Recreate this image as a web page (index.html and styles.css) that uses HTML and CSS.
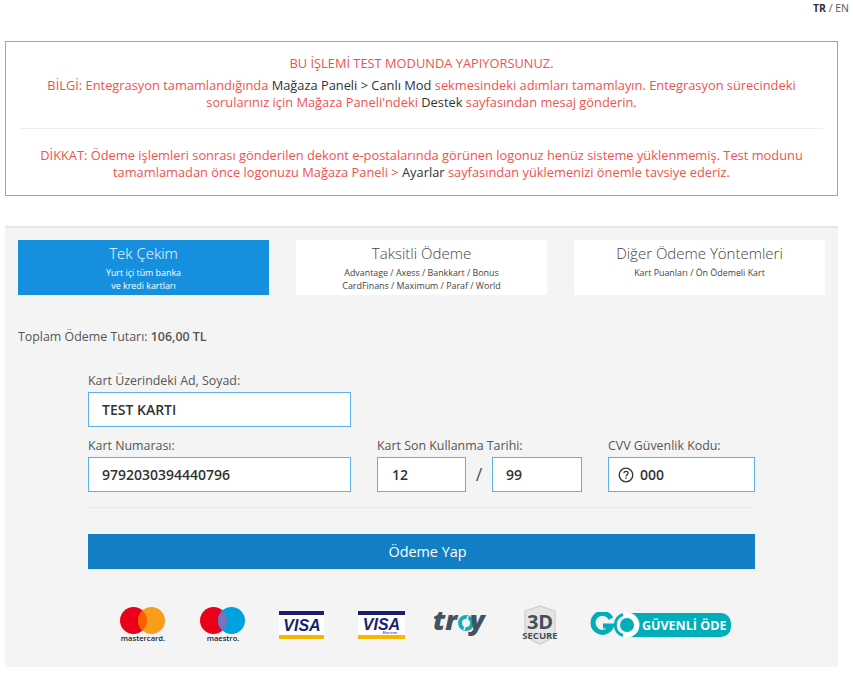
FILE: index.html
```html
<!DOCTYPE html>
<html lang="tr">
<head>
    <meta charset="UTF-8">
    <meta name="viewport" content="width=device-width, initial-scale=1.0">
    <title>Ödeme</title>
    <link rel="stylesheet" href="styles.css">
</head>
<body>
    <div class="lang"><b>TR</b> / EN</div>

    <div class="alert">
        <p class="alert-title">BU İŞLEMİ TEST MODUNDA YAPIYORSUNUZ.</p>
        <p>BİLGİ: Entegrasyon tamamlandığında <span class="dark">Mağaza Paneli &gt; Canlı Mod</span> sekmesindeki adımları tamamlayın. Entegrasyon sürecindeki sorularınız için Mağaza Paneli'ndeki <span class="dark">Destek</span> sayfasından mesaj gönderin.</p>
        <hr class="alert-line">
        <p>DİKKAT: Ödeme işlemleri sonrası gönderilen dekont e-postalarında görünen logonuz henüz sisteme yüklenmemiş. Test modunu tamamlamadan önce logonuzu Mağaza Paneli &gt; <span class="dark">Ayarlar</span> sayfasından yüklemenizi önemle tavsiye ederiz.</p>
    </div>

    <div class="panel">
        <div class="tabs">
            <div class="tab active">
                <div class="tab-title">Tek Çekim</div>
                <div class="tab-sub">Yurt içi tüm banka<br>ve kredi kartları</div>
            </div>
            <div class="tab">
                <div class="tab-title">Taksitli Ödeme</div>
                <div class="tab-sub">Advantage / Axess / Bankkart / Bonus<br>CardFinans / Maximum / Paraf / World</div>
            </div>
            <div class="tab">
                <div class="tab-title">Diğer Ödeme Yöntemleri</div>
                <div class="tab-sub">Kart Puanları / Ön Ödemeli Kart</div>
            </div>
        </div>

        <div class="total">Toplam Ödeme Tutarı: <b>106,00 TL</b></div>

        <form class="form">
            <label class="field name-field">Kart Üzerindeki Ad, Soyad:
                <input class="input" type="text" value="TEST KARTI">
            </label>
            <div class="row">
                <label class="field number-field">Kart Numarası:
                    <input class="input" type="text" value="9792030394440796">
                </label>
                <div class="field expiry-field">Kart Son Kullanma Tarihi:
                    <div class="expiry">
                        <input class="input" type="text" value="12">
                        <span class="slash">/</span>
                        <input class="input" type="text" value="99">
                    </div>
                </div>
                <div class="field cvv-field">CVV Güvenlik Kodu:
                    <div class="input cvv">
                        <svg class="help" width="16" height="16" viewBox="0 0 16 16" fill="none" stroke="#333" stroke-width="1.3">
                            <circle cx="8" cy="8" r="6.8"/>
                            <path d="M5.9 6.3c0-1.3 1-2 2.1-2s2.1.7 2.1 1.8c0 1.5-2.1 1.6-2.1 3.3"/>
                            <path d="M8 10.6v1.4"/>
                        </svg>
                        <span>000</span>
                    </div>
                </div>
            </div>
            <hr class="form-line">
            <button class="pay" type="button">Ödeme Yap</button>
        </form>

        <div class="logos">
            <!-- mastercard -->
            <svg class="logo-card" width="45" height="36" viewBox="0 0 45 36">
                <circle cx="13.5" cy="13.5" r="13.5" fill="#eb001b"/>
                <circle cx="31.5" cy="13.5" r="13.5" fill="#f79e1b"/>
                <path d="M22.5 3.4a13.5 13.5 0 0 1 0 20.2a13.5 13.5 0 0 1 0-20.2z" fill="#ff5f00"/>
                <text x="23" y="34" class="card-word" text-anchor="middle">mastercard.</text>
            </svg>
            <!-- maestro -->
            <svg class="logo-maestro" width="45" height="36" viewBox="0 0 45 36">
                <circle cx="13.5" cy="13.5" r="13.5" fill="#eb001b"/>
                <circle cx="31.5" cy="13.5" r="13.5" fill="#00a1df"/>
                <path d="M22.5 3.4a13.5 13.5 0 0 1 0 20.2a13.5 13.5 0 0 1 0-20.2z" fill="#7673c0"/>
                <text x="23" y="34" class="card-word" text-anchor="middle">maestro.</text>
            </svg>
            <!-- visa -->
            <svg class="logo-visa" width="45" height="28" viewBox="0 0 45 28">
                <rect width="45" height="28" fill="#fff"/>
                <rect width="45" height="4" fill="#1a1f71"/>
                <rect y="24" width="45" height="4" fill="#f7b600"/>
                <text x="23" y="19.5" class="visa" text-anchor="middle">VISA</text>
            </svg>
            <!-- visa electron -->
            <svg class="logo-electron" width="47" height="28" viewBox="0 0 47 28">
                <rect width="47" height="28" fill="#fff"/>
                <rect width="47" height="4" fill="#1a1f71"/>
                <rect y="24" width="47" height="4" fill="#f7b600"/>
                <text x="23.5" y="18.5" class="visa" text-anchor="middle">VISA</text>
                <text x="32" y="23.4" class="electron" text-anchor="middle">Electron</text>
            </svg>
            <!-- troy -->
            <svg class="logo-troy" width="56" height="40" viewBox="0 0 56 40">
                <text x="0" y="29" class="troy">tr</text>
                <circle cx="33" cy="22" r="6" fill="none" stroke="#19aabb" stroke-width="4"/>
                <path d="M35 15l-1.5 5M31 29l1.5-5" stroke="#f4f4f4" stroke-width="1.6"/>
                <text x="37" y="29" class="troy">y</text>
            </svg>
            <!-- 3D secure -->
            <svg class="logo-secure" width="38" height="40" viewBox="0 0 38 40">
                <path d="M19 1l15 5v17c0 8-7 13-15 16C11 36 4 31 4 23V6z" fill="#e6e6e6" stroke="#d2d2d2" stroke-width="1.5"/>
                <text x="19" y="24" class="secure-3d" text-anchor="middle">3D</text>
                <text x="19" y="34" class="secure-word" text-anchor="middle">SECURE</text>
            </svg>
            <!-- go guvenli ode -->
            <svg class="logo-go" width="141" height="26" viewBox="0 0 141 26">
                <rect x="30" y="1" width="111" height="24" rx="10" fill="#00aeba"/>
                <path d="M21 6.5A9.5 9.5 0 1 0 21.5 14H13" fill="none" stroke="#00aeba" stroke-width="5"/>
                <circle cx="37" cy="13" r="12.5" fill="#fff"/>
                <circle cx="37" cy="13" r="7" fill="#00aeba"/>
                <path d="M33 2.5A11 11 0 0 0 33 23.5" fill="none" stroke="#00aeba" stroke-width="3"/>
                <text x="52" y="18" class="go-text">GÜVENLİ ÖDE</text>
            </svg>
        </div>
    </div>
</body>
</html>
```

FILE: styles.css
```css
* {
    box-sizing: border-box;
}
body {
    margin: 0;
    padding: 0 5px;
    font-family: "Open Sans", sans-serif;
    font-size: 12.4px;
    color: #555;
    background-color: #fff;
}
.lang {
    height: 41px;
    padding-top: 1px;
    margin-right: -1px;
    font-size: 10.5px;
    line-height: 14px;
    text-align: right;
}
.lang b {
    color: #333;
}
.alert {
    width: 833px;
    height: 155px;
    padding: 13px 14px 0;
    border: 1px solid #f0827c;
    color: #ef5350;
    font-size: 12.85px;
    line-height: 17px;
    text-align: center;
}
.alert p {
    margin: 0;
}
.alert-title {
    padding-bottom: 5px;
}
.dark {
    color: #333;
}
.alert-line {
    height: 1px;
    margin: 17px 0 18px;
    border: 0;
    background-color: #eee;
}
.panel {
    width: 833px;
    height: 441px;
    margin-top: 30px;
    padding: 12px 13px 0;
    border-top: 2px solid #e6e6e6;
    background-color: #f4f4f4;
}
.tabs {
    display: flex;
    gap: 27px;
}
.tab {
    flex: 1;
    height: 55px;
    padding-top: 3px;
    background-color: #fff;
    text-align: center;
    color: #444;
}
.tab.active {
    background-color: #1690de;
    color: #fff;
}
.tab-title {
    font-size: 15px;
    font-weight: 300;
    line-height: 20px;
}
.tab-sub {
    margin-top: 3px;
    font-size: 8.9px;
    line-height: 13px;
}
.total {
    margin-top: 33px;
    line-height: 17px;
}
.total b {
    font-weight: 600;
}
.form {
    width: 667px;
    margin: 27px 0 0 70px;
}
.field {
    display: block;
    line-height: 17px;
}
.name-field {
    width: 263px;
}
.row {
    display: flex;
    gap: 26px;
    margin-top: 10px;
}
.number-field {
    width: 263px;
}
.expiry-field {
    width: 205px;
}
.cvv-field {
    width: 147px;
}
.input {
    display: block;
    width: 100%;
    height: 35px;
    margin-top: 3px;
    padding: 0 13px;
    border: 1px solid #5fb0e8;
    border-radius: 0;
    outline: none;
    background-color: #fff;
    color: #333;
    font-family: "Open Sans", sans-serif;
    font-size: 14px;
    font-weight: 600;
}
.expiry {
    display: flex;
    align-items: center;
}
.expiry .input {
    width: 89px;
    padding-left: 14px;
}
.expiry .input:last-child {
    width: 90px;
    padding-left: 13px;
}
.slash {
    flex: 1;
    margin-top: 3px;
    font-size: 18px;
    text-align: center;
}
.cvv {
    display: flex;
    align-items: center;
    gap: 6px;
    padding: 0 9px;
}
.form-line {
    height: 1px;
    margin: 15px 0 26px;
    border: 0;
    background-color: #ebebeb;
}
.pay {
    display: block;
    width: 100%;
    height: 35px;
    padding-left: 18px;
    border: 0;
    background-color: #127fc5;
    color: #fff;
    font-family: "Open Sans", sans-serif;
    font-size: 14.4px;
}
.logos {
    display: flex;
    align-items: center;
    height: 40px;
    margin: 36px 0 0 102px;
}
.logo-maestro {
    margin-left: 35px;
}
.logo-visa {
    margin-left: 34px;
}
.logo-electron {
    margin-left: 34px;
}
.logo-troy {
    margin-left: 28px;
    margin-top: -8px;
}
.logo-secure {
    margin-left: 32px;
}
.logo-go {
    margin-left: 31px;
}
.card-word {
    font-family: "Open Sans", sans-serif;
    font-size: 7.6px;
    font-weight: 600;
    fill: #222;
}
.visa {
    font-family: "Liberation Sans", sans-serif;
    font-size: 16px;
    font-weight: 700;
    font-style: italic;
    fill: #1a1f71;
}
.electron {
    font-family: "Liberation Sans", sans-serif;
    font-size: 4px;
    fill: #1a1f71;
}
.troy {
    font-family: "Open Sans", sans-serif;
    font-size: 27px;
    font-weight: 800;
    font-style: italic;
    fill: #44525c;
}
.secure-3d {
    font-family: "Open Sans", sans-serif;
    font-size: 20px;
    font-weight: 700;
    fill: #454f58;
}
.secure-word {
    font-family: "Open Sans", sans-serif;
    font-size: 9.5px;
    font-weight: 700;
    fill: #454f58;
}
.go-text {
    font-family: "Open Sans", sans-serif;
    font-size: 12.5px;
    font-weight: 700;
    fill: #fff;
}
```
